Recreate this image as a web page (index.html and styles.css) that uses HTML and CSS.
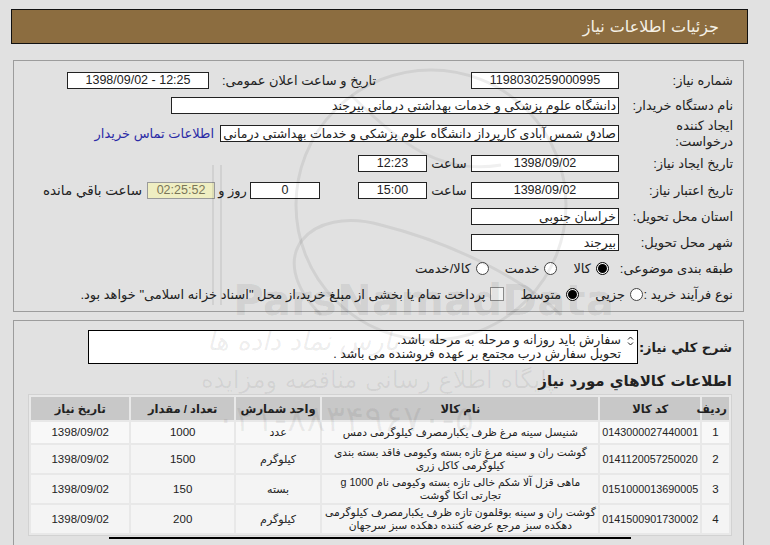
FILE: index.html
```html
<!DOCTYPE html>
<html lang="fa" dir="rtl">
<head>
<meta charset="utf-8">
<title>جزئیات اطلاعات نیاز</title>
<link rel="stylesheet" href="styles.css">
</head>
<body>
<div class="page">
  <div class="header">جزئیات اطلاعات نیاز</div>

  <div class="panel info">
    <div class="row r1">
      <div class="lbl">شماره نیاز:</div>
      <div class="box w148 c">1198030259000995</div>
      <div class="left-grp">
        <div class="lbl-in">تاریخ و ساعت اعلان عمومی:</div>
        <div class="box w142 c ltr">1398/09/02 - 12:25</div>
      </div>
    </div>
    <div class="row r2">
      <div class="lbl">نام دستگاه خریدار:</div>
      <div class="box w448">دانشگاه علوم پزشکی و خدمات بهداشتی درمانی بیرجند</div>
    </div>
    <div class="row r3">
      <div class="lbl two">ایجاد کننده<br>درخواست:</div>
      <div class="box w399">صادق شمس آبادی کارپرداز دانشگاه علوم پزشکی و خدمات بهداشتی درمانی</div>
      <a class="link" href="#">اطلاعات تماس خریدار</a>
    </div>
    <div class="row r4">
      <div class="lbl">تاریخ ایجاد نیاز:</div>
      <div class="box w148 c">1398/09/02</div>
      <div class="sep">ساعت</div>
      <div class="box w69 c">12:23</div>
    </div>
    <div class="row r5">
      <div class="lbl">تاریخ اعتبار نیاز:</div>
      <div class="box w148 c">1398/09/02</div>
      <div class="sep">ساعت</div>
      <div class="box w69 c">15:00</div>
      <div class="box w70 c days">0</div>
      <div class="sep2">روز و</div>
      <div class="box w68 c timer">02:25:52</div>
      <div class="remain">ساعت باقي مانده</div>
    </div>
    <div class="row r6">
      <div class="lbl">استان محل تحویل:</div>
      <div class="box w148">خراسان جنوبی</div>
    </div>
    <div class="row r7">
      <div class="lbl">شهر محل تحویل:</div>
      <div class="box w148">بیرجند</div>
    </div>
    <div class="row r8">
      <div class="lbl">طبقه بندی موضوعی:</div>
      <div class="opts o8">
        <span class="opt"><span class="radio on"></span>کالا</span>
        <span class="opt"><span class="radio"></span>خدمت</span>
        <span class="opt"><span class="radio"></span>کالا/خدمت</span>
      </div>
    </div>
    <div class="row r9">
      <div class="lbl lbl9">نوع فرآیند خرید :</div>
      <div class="opts">
        <span class="opt"><span class="radio"></span>جزیی</span>
        <span class="opt"><span class="radio on"></span>متوسط</span>
        <span class="opt"><span class="check"></span>پرداخت تمام یا بخشی از مبلغ خرید،از محل "اسناد خزانه اسلامی" خواهد بود.</span>
      </div>
    </div>
  </div>

  <div class="panel goods">
    <div class="desc-row">
      <div class="desc-lbl">شرح كلي نياز:</div>
      <div class="textarea">
        <div class="spin"><svg width="7" height="10" viewBox="0 0 7 10"><path d="M1 3.5 L3.5 1 L6 3.5" fill="none" stroke="#222" stroke-width="1"/><path d="M1 6.5 L3.5 9 L6 6.5" fill="none" stroke="#222" stroke-width="1"/></svg></div>
        <div class="ta-text">سفارش باید روزانه و مرحله به مرحله باشد.<br>تحویل سفارش درب مجتمع بر عهده فروشنده می باشد .</div>
      </div>
    </div>
    <div class="sub-title">اطلاعات كالاهاي مورد نياز</div>
    <table class="items">
      <colgroup>
        <col class="c-row"><col class="c-code"><col class="c-name"><col class="c-unit"><col class="c-qty"><col class="c-date">
      </colgroup>
      <thead>
        <tr>
          <th>ردیف</th>
          <th>کد کالا</th>
          <th>نام کالا</th>
          <th>واحد شمارش</th>
          <th>تعداد / مقدار</th>
          <th>تاریخ نیاز</th>
        </tr>
      </thead>
      <tbody>
        <tr class="one">
          <td class="num">1</td>
          <td class="code">0143000027440001</td>
          <td class="name">شنیسل سینه مرغ ظرف یکبارمصرف کیلوگرمی دمس</td>
          <td>عدد</td>
          <td class="num">1000</td>
          <td class="num">1398/09/02</td>
        </tr>
        <tr>
          <td class="num">2</td>
          <td class="code">0141120057250020</td>
          <td class="name">گوشت ران و سینه مرغ تازه بسته وکیومی فاقد بسته بندی<br>کیلوگرمی کاکل زری</td>
          <td>کیلوگرم</td>
          <td class="num">1500</td>
          <td class="num">1398/09/02</td>
        </tr>
        <tr>
          <td class="num">3</td>
          <td class="code">0151000013690005</td>
          <td class="name">ماهی قزل آلا شکم خالی تازه بسته وکیومی نام g 1000<br>تجارتی اتکا گوشت</td>
          <td>بسته</td>
          <td class="num">150</td>
          <td class="num">1398/09/02</td>
        </tr>
        <tr>
          <td class="num">4</td>
          <td class="code">0141500901730002</td>
          <td class="name">گوشت ران و سینه بوقلمون تازه ظرف یکبارمصرف کیلوگرمی<br>دهکده سبز مرجع عرضه کننده دهکده سبز سرجهان</td>
          <td>کیلوگرم</td>
          <td class="num">200</td>
          <td class="num">1398/09/02</td>
        </tr>
      </tbody>
    </table>
    <div class="next-box"></div>
  </div>

  <div class="wm" aria-hidden="true">
    <svg class="wm-logo" width="420" height="300" viewBox="0 0 420 300">
      <circle cx="230" cy="150" r="135" fill="none" stroke="rgba(0,0,0,0.07)" stroke-width="3"/>
      <path d="M12 110 L12 250 M20 110 L20 250" stroke="rgba(0,0,0,0.07)" stroke-width="2" fill="none"/>
      <path d="M120 260 C 60 200, 110 150, 180 170 C 260 190, 330 230, 360 260" stroke="rgba(0,0,0,0.07)" stroke-width="3" fill="none"/>
      <path d="M150 40 C 200 90, 240 120, 300 110" stroke="rgba(0,0,0,0.06)" stroke-width="3" fill="none"/>
    </svg>
    <div class="wm-latin">ParsNamadData</div>
    <div class="wm-fa1">پارس نماد داده ها</div>
    <div class="wm-fa2">پایگاه اطلاع رسانی مناقصه ومزایده</div>
    <div class="wm-fa3">۰۲۱-۸۸۳۴۹۶۷۰-۵</div>
  </div>
</div>
</body>
</html>
```

FILE: styles.css
```css
* { box-sizing: border-box; }

html, body {
  margin: 0;
  padding: 0;
}

body {
  background: #e1e1e1;
  font-family: "Liberation Sans", "DejaVu Sans", sans-serif;
  font-size: 12.5px;
  color: #222;
  direction: rtl;
  overflow: hidden;
}

.page {
  position: relative;
  width: 737px;
  margin-right: 22px;
  margin-left: 11px;
  padding-top: 9px;
}

.header {
  height: 35px;
  background: #8c6d40;
  border: 1px solid #111;
  color: #f5f1e6;
  display: flex;
  align-items: center;
  padding-right: 28px;
  font-family: "DejaVu Sans", sans-serif;
  font-size: 16px;
}

.panel {
  margin-left: 2px;
  margin-right: 4px;
  border: 1px solid #9c9c9c;
}

.info {
  margin-top: 16px;
  height: 252px;
  padding: 6px 10px 0 0;
}

.row {
  display: flex;
  align-items: center;
  height: 26px;
}
.r2 { height: 25px; }
.r3 { height: 31px; }
.r4 { height: 28px; }

.lbl {
  width: 114px;
  flex: none;
  text-align: right;
  white-space: nowrap;
  font-size: 13px;
}
.lbl.two { line-height: 16px; }
.lbl9 { width: 90px; }
.lbl-in { font-size: 13px; white-space: nowrap; }

.box {
  height: 17px;
  border: 1px solid #222;
  background: #fff;
  display: flex;
  align-items: center;
  padding: 0 2px;
  white-space: nowrap;
  overflow: hidden;
  flex: none;
}
.box.c { justify-content: center; }
.ltr { direction: ltr; }

.w148 { width: 148px; }
.w142 { width: 142px; }
.w448 { width: 448px; }
.w399 { width: 399px; }
.w69 { width: 69px; }
.w70 { width: 70px; }
.w68 { width: 68px; }

.left-grp {
  margin-right: auto;
  margin-left: 53px;
  display: flex;
  align-items: center;
  gap: 13px;
}

.link {
  margin-right: 6px;
  color: #2b2ba6;
  text-decoration: none;
  white-space: nowrap;
  font-size: 13px;
}

.sep {
  width: 44px;
  flex: none;
  text-align: center;
  font-size: 13px;
}
.days { margin-right: 38px; }
.sep2 {
  width: 35px;
  flex: none;
  text-align: center;
  font-size: 13px;
}
.timer {
  background: #efeec2;
  border-color: #9a9a9a;
  color: #7a7558;
}
.remain {
  margin-right: 5px;
  white-space: nowrap;
  font-size: 13.5px;
}

.opts {
  display: flex;
  align-items: center;
  gap: 16px;
  font-size: 13px;
}
.o8 { margin-right: 10px; }

.opt {
  display: flex;
  align-items: center;
  gap: 5px;
  white-space: nowrap;
}

.radio {
  width: 13px;
  height: 13px;
  border: 1px solid #444;
  border-radius: 50%;
  background: #fff;
  display: flex;
  align-items: center;
  justify-content: center;
  flex: none;
}
.radio.on {
  border: 1px solid #000;
}
.radio.on::after {
  content: "";
  width: 9px;
  height: 9px;
  border-radius: 50%;
  background: #000;
}

.check {
  width: 14px;
  height: 14px;
  border: 1px solid #8a8a8a;
  background: #f3f3f3;
  flex: none;
}

.goods {
  margin-top: 8px;
  padding: 9px 11px 0 0;
  height: 240px;
}

.desc-row {
  display: flex;
  align-items: center;
}
.desc-lbl {
  width: 89px;
  margin-left: 5px;
  flex: none;
  text-align: right;
  font-family: "DejaVu Sans", sans-serif;
  font-weight: bold;
  font-size: 13px;
  white-space: nowrap;
}
.textarea {
  width: 550px;
  height: 34px;
  border: 1px solid #000;
  background: #fff;
  display: flex;
  align-items: flex-start;
  padding: 2px 3px 0 4px;
  gap: 5px;
}
.spin {
  width: 8px;
  flex: none;
  padding-top: 2px;
}
.ta-text {
  font-size: 12.5px;
  line-height: 14px;
  white-space: nowrap;
}

.sub-title {
  margin-top: 6px;
  font-family: "DejaVu Sans", sans-serif;
  font-weight: bold;
  font-size: 15px;
  height: 22px;
  line-height: 22px;
}

.items {
  margin-top: 2px;
  width: 704px;
  table-layout: fixed;
  border-collapse: separate;
  border-spacing: 2px;
  background: #e8e8e8;
  border: 1px solid #d2d2d2;
  font-size: 11px;
}
.items th {
  background: #c8c8c8;
  height: 23px;
  font-weight: bold;
  font-size: 11.5px;
  color: #222;
  padding: 0 2px;
  white-space: nowrap;
}
.items td {
  background: #f4f4f4;
  text-align: center;
  line-height: 13px;
  padding: 1px 1px;
  height: 28px;
  white-space: nowrap;
  overflow: hidden;
}
.items tr.one td { height: 21px; background: #f8f8f8; }
.items td.num { font-size: 11.5px; }
.items td.code { font-size: 10.8px; padding: 0; }
.items td.name { font-size: 10.7px; padding: 1px 0; }
.c-row { width: 27px; }
.c-code { width: 99px; }
.c-name { width: 275px; }
.c-unit { width: 84px; }
.c-qty { width: 102px; }
.c-date { width: 98px; }

.next-box {
  margin-top: 1px;
  margin-right: 101px;
  width: 522px;
  height: 20px;
  border-top: 2px solid #000;
}

/* watermark overlay */
.wm {
  position: absolute;
  inset: 0;
  pointer-events: none;
  direction: ltr;
}
.wm-logo {
  position: absolute;
  left: 190px;
  top: 55px;
}
.wm-latin {
  position: absolute;
  left: 222px;
  top: 276px;
  font-family: "DejaVu Sans", sans-serif;
  font-weight: bold;
  font-size: 42px;
  color: rgba(0, 0, 0, 0.07);
  white-space: nowrap;
}
.wm-fa1 {
  position: absolute;
  left: 196px;
  top: 326px;
  font-family: "DejaVu Sans", sans-serif;
  font-size: 26px;
  font-style: italic;
  color: rgba(0, 0, 0, 0.08);
  white-space: nowrap;
}
.wm-fa2 {
  position: absolute;
  left: 190px;
  top: 366px;
  font-family: "DejaVu Sans", sans-serif;
  font-size: 24px;
  color: rgba(0, 0, 0, 0.06);
  white-space: nowrap;
}
.wm-fa3 {
  position: absolute;
  left: 205px;
  top: 398px;
  font-family: "DejaVu Sans", sans-serif;
  font-size: 36px;
  color: rgba(0, 0, 0, 0.06);
  white-space: nowrap;
}
```
